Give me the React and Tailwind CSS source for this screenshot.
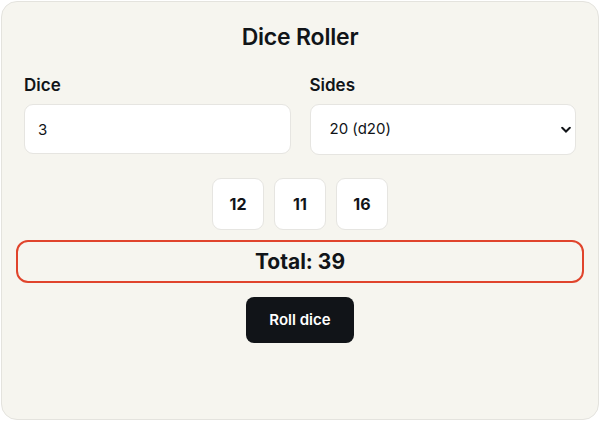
import React, { useState } from 'react';

const DiceRoller = () => {
  const [count, setCount] = useState('3');
  const [sides, setSides] = useState('20');
  const [rolls, setRolls] = useState([12, 11, 16]);

  const roll = () => {
    const n = Math.max(1, Math.min(20, parseInt(count, 10) || 1));
    const s = parseInt(sides, 10);
    setRolls(Array.from({ length: n }, () => Math.floor(Math.random() * s) + 1));
  };

  const total = rolls.reduce((a, b) => a + b, 0);

  return (
    <div className="w-[600px] h-[421px] p-[1px]">
      <div
        className="h-full rounded-[16px] border border-[#e4e3de] bg-[#f6f5ef] px-[22px] pt-[20px] text-[#111418]"
        style={{ fontFamily: 'Inter, "Noto Sans", sans-serif' }}
      >
        <h1 className="text-center text-[23px] font-semibold leading-[30px] tracking-[-0.2px]">Dice Roller</h1>

        <div className="mt-[21px] grid grid-cols-2 gap-[19px]">
          <label className="flex flex-col">
            <span className="text-[17px] font-semibold leading-[24px]">Dice</span>
            <input
              type="number"
              value={count}
              onChange={(e) => setCount(e.target.value)}
              className="mt-[7px] h-[50px] rounded-[9px] border border-[#e6e5e1] bg-white px-[13px] text-[15px] outline-none [appearance:textfield] [&::-webkit-inner-spin-button]:appearance-none"
            />
          </label>
          <label className="flex flex-col">
            <span className="text-[17px] font-semibold leading-[24px]">Sides</span>
            <div className="relative mt-[7px]">
              <select
                value={sides}
                onChange={(e) => setSides(e.target.value)}
                className="h-[51px] w-full appearance-none rounded-[9px] border border-[#e6e5e1] bg-white px-[19px] text-[15px] outline-none"
              >
                <option value="4">4 (d4)</option>
                <option value="6">6 (d6)</option>
                <option value="8">8 (d8)</option>
                <option value="10">10 (d10)</option>
                <option value="12">12 (d12)</option>
                <option value="20">20 (d20)</option>
                <option value="100">100 (d100)</option>
              </select>
              <svg
                className="pointer-events-none absolute right-[5px] top-1/2 -translate-y-1/2"
                width="10"
                height="7"
                viewBox="0 0 10 7"
                fill="none"
              >
                <path d="M1.2 1.3L5 5L8.8 1.3" stroke="#111418" strokeWidth="2" strokeLinecap="round" />
              </svg>
            </div>
          </label>
        </div>

        <div className="mt-[23px] flex justify-center gap-[10px]">
          {rolls.map((r, i) => (
            <div
              key={i}
              className="flex h-[52px] w-[52px] items-center justify-center rounded-[9px] border border-[#e6e5e1] bg-white text-[16px] font-bold"
            >
              {r}
            </div>
          ))}
        </div>

        <div className="-mx-[8px] mt-[10px] flex h-[43px] items-center justify-center rounded-[12px] border-2 border-[#e0442c] text-[21px] font-bold">
          Total: {total}
        </div>

        <div className="mt-[14px] flex justify-center">
          <button
            onClick={roll}
            className="h-[46px] w-[108px] rounded-[8px] bg-[#111418] text-[15px] font-semibold text-white"
          >
            Roll dice
          </button>
        </div>
      </div>
    </div>
  );
};

export default function App() {
  return <DiceRoller />;
}
